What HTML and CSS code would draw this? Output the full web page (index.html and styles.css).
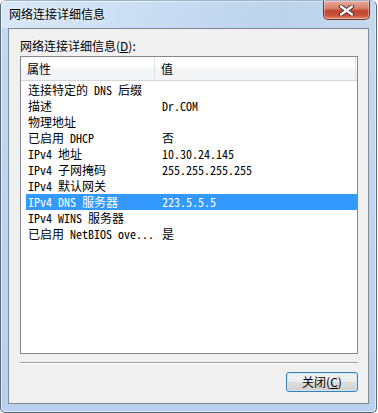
FILE: index.html
```html
<!DOCTYPE html>
<html lang="zh-CN">
<head>
    <meta charset="UTF-8">
    <title>网络连接详细信息</title>
    <link rel="stylesheet" href="styles.css">
</head>

<body>
<div id="window">
    <div id="titlebar">
        <span class="title">网络连接详细信息</span>
        <span id="close">
            <svg width="17" height="11" viewBox="0 0 17 11">
                <path d="M3 1.5 L14 9.5 M14 1.5 L3 9.5" stroke="#4a2a26" stroke-width="4.2" stroke-linecap="round"/>
                <path d="M3 1.5 L14 9.5 M14 1.5 L3 9.5" stroke="#fff" stroke-width="2.4" stroke-linecap="round"/>
            </svg>
        </span>
    </div>
    <div id="client">
        <div class="label">网络连接详细信息(<u>D</u>):</div>
        <div id="list">
            <div class="head">
                <span class="col1">属性</span>
                <span class="col2">值</span>
            </div>
            <ul>
                <li><span>连接特定的 DNS 后缀</span><span></span></li>
                <li><span>描述</span><span>Dr.COM</span></li>
                <li><span>物理地址</span><span></span></li>
                <li><span>已启用 DHCP</span><span>否</span></li>
                <li><span>IPv4 地址</span><span>10.30.24.145</span></li>
                <li><span>IPv4 子网掩码</span><span>255.255.255.255</span></li>
                <li><span>IPv4 默认网关</span><span></span></li>
                <li class="selected"><span>IPv4 DNS 服务器</span><span>223.5.5.5</span></li>
                <li><span>IPv4 WINS 服务器</span><span></span></li>
                <li><span>已启用 NetBIOS ove...</span><span>是</span></li>
            </ul>
        </div>
        <div class="sep"></div>
        <div class="buttons">
            <button class="btn">关闭(<u>C</u>)</button>
        </div>
    </div>
</div>
</body>
</html>
```

FILE: styles.css
```css
*{
    margin:0;
    padding:0;
    box-sizing:border-box;
}
ul,ol{
    list-style: none;
}
html,body{
    width:378px;
    height:413px;
    overflow:hidden;
    background:#fff;
}
body{
    font-family:"Noto Sans Mono CJK SC","Noto Sans CJK SC",monospace;
    font-size:12px;
    color:#000;
}

#window{
    width:377px;
    height:413px;
    display:flex;
    flex-direction:column;
    border:1px solid #5d6a78;
    border-top-color:#9fb4c8;
    border-radius:6px 6px 5px 5px;
    background:linear-gradient(to bottom,#c3daf2 0,#bcd4ee 60%,#b7d1ee 100%);
    box-shadow:inset 1px 1px 0 rgba(255,255,255,.55),inset -1px -1px 0 rgba(255,255,255,.5);
}
#titlebar{
    height:27px;
    display:flex;
    align-items:flex-start;
    padding-left:8px;
    background:linear-gradient(to right,rgba(255,255,255,.35) 0,rgba(255,255,255,.1) 40%,rgba(170,190,210,.25) 75%,rgba(200,215,230,.3) 100%);
}
#titlebar .title{
    font-family:"Noto Sans CJK SC",sans-serif;
    font-size:12px;
    line-height:16px;
    margin-top:5px;
    color:#000;
    text-shadow:0 0 6px rgba(255,255,255,.9);
}
#close{
    margin-left:auto;
    margin-right:6px;
    width:47px;
    height:19px;
    display:flex;
    align-items:center;
    justify-content:center;
    border:1px solid #6c3b35;
    border-top:none;
    border-radius:0 0 5px 5px;
    background:linear-gradient(to bottom,#e9a899 0,#d8816d 40%,#c2452d 55%,#c9533a 80%,#e08a6c 100%);
    box-shadow:inset 0 0 0 1px rgba(255,255,255,.35);
}

#client{
    flex:1;
    margin:0 7px 8px 7px;
    border:1px solid #7f8a96;
    background:#f0f0f0;
    padding:9px 10px 0 11px;
    display:flex;
    flex-direction:column;
}
.label{
    font-family:"Noto Sans CJK SC",sans-serif;
    line-height:16px;
    height:18px;
}
.label u{
    text-decoration:underline;
}

#list{
    height:298px;
    border:1px solid #828790;
    background:#fff;
}
#list .head{
    height:24px;
    display:flex;
    background:linear-gradient(to bottom,#fff 0,#fff 45%,#f3f4f6 55%,#f3f4f6 100%);
    border-bottom:1px solid #d5d5d5;
    font-family:"Noto Sans CJK SC",sans-serif;
    line-height:23px;
}
#list .head span{
    padding-left:6px;
}
#list .head .col1{
    width:134px;
    border-right:1px solid #dfe2e6;
}
#list .head .col2{
    flex:1;
    border-right:1px solid #dfe2e6;
    margin-right:1px;
}
#list ul{
    margin:1px 0 0 5px;
}
#list li{
    height:16px;
    line-height:16px;
    padding-left:2px;
    display:grid;
    grid-template-columns:134px 1fr;
    white-space:nowrap;
}
#list li.selected{
    background:#3399ff;
    color:#fff;
}

.sep{
    margin-top:8px;
    height:2px;
    border-top:1px solid #a0a0a0;
    border-bottom:1px solid #fff;
}
.buttons{
    display:flex;
    justify-content:flex-end;
    margin-top:8px;
}
.btn{
    width:72px;
    height:20px;
    font-family:"Noto Sans CJK SC",sans-serif;
    font-size:12px;
    line-height:16px;
    color:#000;
    border:1px solid #3c7fb1;
    border-radius:3px;
    background:linear-gradient(to bottom,#f2f2f2 0,#ebebeb 50%,#dddddd 51%,#cfcfcf 100%);
    box-shadow:inset 0 0 0 1px #c8e8f9;
}
```
